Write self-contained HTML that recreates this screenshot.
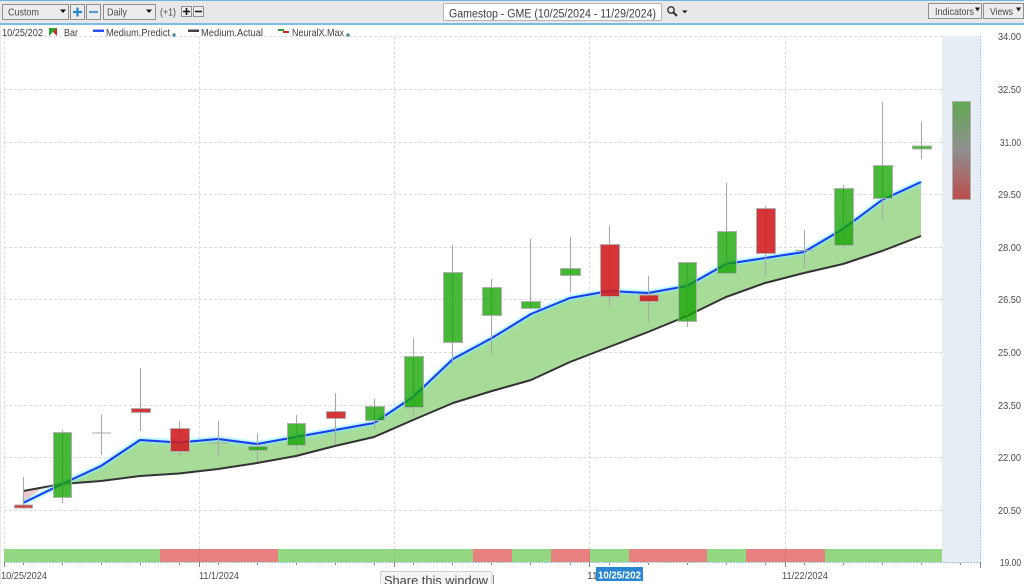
<!DOCTYPE html>
<html>
<head>
<meta charset="utf-8">
<style>
html,body{margin:0;padding:0;background:#fff}
#root{position:relative;width:1024px;height:584px;overflow:hidden;background:#fff;font-family:"Liberation Sans",sans-serif;color:#444}
svg{position:absolute;left:0;top:0;filter:blur(.35px)}
</style>
</head>
<body>
<div id="root">
<svg width="1024" height="584" viewBox="0 0 1024 584" font-family="Liberation Sans, sans-serif">
<defs>
<linearGradient id="fc" x1="0" y1="0" x2="0" y2="1">
<stop offset="0" stop-color="#62a854"/><stop offset=".5" stop-color="#8f8f8f"/><stop offset="1" stop-color="#bd4c4c"/>
</linearGradient>
<filter id="gl" x="-5%" y="-20%" width="110%" height="140%"><feGaussianBlur stdDeviation="1.2"/></filter>
</defs>
<!-- toolbar -->
<rect x="0" y="0" width="1024" height="24" fill="#e8e8e8"/>
<rect x="0" y="0" width="1024" height="1" fill="#6fb3e0"/>
<rect x="0" y="23" width="1024" height="2" fill="#7dbbe6"/>
<g fill="#ececec" stroke="#8f8f8f">
<rect x="2.500" y="4.500" width="66" height="15"/>
<rect x="70.500" y="4.500" width="14" height="15"/>
<rect x="86.500" y="4.500" width="14" height="15"/>
<rect x="103.500" y="4.500" width="52" height="15"/>
<rect x="181.500" y="6.500" width="10" height="10"/>
<rect x="193.500" y="6.500" width="10" height="10"/>
<rect x="928.500" y="3.500" width="53" height="15"/>
<rect x="983.500" y="3.500" width="40" height="15"/>
</g>
<rect x="443.500" y="3.500" width="218" height="17" rx="1" fill="#fff" stroke="#b5b5b5"/>
<g font-size="10.500" fill="#4a4a4a">
<text x="8" y="15.500" textLength="31" lengthAdjust="spacingAndGlyphs">Custom</text>
<text x="107" y="15.500" textLength="20" lengthAdjust="spacingAndGlyphs">Daily</text>
<text x="160" y="15.500" textLength="16" lengthAdjust="spacingAndGlyphs">(+1)</text>
<text x="935" y="15" textLength="39" lengthAdjust="spacingAndGlyphs">Indicators</text>
<text x="990" y="15" textLength="23" lengthAdjust="spacingAndGlyphs">Views</text>
</g>
<text x="449" y="17.500" font-size="11.500" fill="#3d3d3d" textLength="207" lengthAdjust="spacingAndGlyphs">Gamestop - GME (10/25/2024 - 11/29/2024)</text>
<g fill="#111">
<path d="M60 9.500h6l-3 3.500z"/><path d="M146 9.500h6l-3 3.500z"/>
<path d="M975 7.500h5l-2.500 4z"/><path d="M1016 7.500h5l-2.500 4z"/>
<path d="M682 10.500h5.500l-2.750 2.800z"/>
</g>
<path d="M77.500 7.500v9M73 12h9" stroke="#2a86c8" stroke-width="2.200"/>
<path d="M89 12h9" stroke="#5d9ac8" stroke-width="2.200"/>
<path d="M186.500 8v7M183 11.500h7M195 11.500h7" stroke="#111" stroke-width="1.600"/>
<circle cx="671" cy="10" r="3.200" fill="none" stroke="#333" stroke-width="1.400"/>
<path d="M673.500 12.500l3.500 3.500" stroke="#333" stroke-width="2"/>

<!-- forecast area -->
<rect x="942" y="36" width="38" height="526" fill="#e8eef6"/>
<!-- grid -->
<g stroke="#dcdcdc" stroke-dasharray="3 2" fill="none">
<path d="M4 36.500H942M4 89.500H942M4 142.500H942M4 194.500H942M4 247.500H942M4 299.500H942M4 352.500H942M4 405.500H942M4 457.500H942M4 510.500H942"/>
<path d="M4.500 36V562M199.500 36V562M394.500 36V562M589.500 36V562M785.500 36V562"/>
</g>
<path d="M0.500 25V584" stroke="#e6e6e6" stroke-width="1"/>
<path d="M980.500 36V562M4 562.500H980" stroke="#9dcbec" stroke-dasharray="2 1" fill="none"/>

<!-- bottom strip -->
<g>
<rect x="4" y="549" width="156" height="13" fill="#94d783"/>
<rect x="160" y="549" width="118" height="13" fill="#e78080"/>
<rect x="278" y="549" width="195" height="13" fill="#94d783"/>
<rect x="473" y="549" width="39" height="13" fill="#e78080"/>
<rect x="512" y="549" width="39" height="13" fill="#94d783"/>
<rect x="551" y="549" width="39" height="13" fill="#e78080"/>
<rect x="590" y="549" width="39" height="13" fill="#94d783"/>
<rect x="629" y="549" width="78" height="13" fill="#e78080"/>
<rect x="707" y="549" width="39" height="13" fill="#94d783"/>
<rect x="746" y="549" width="79" height="13" fill="#e78080"/>
<rect x="825" y="549" width="117" height="13" fill="#94d783"/>
</g>
<path d="M199.500 549V562M394.500 549V562M589.500 549V562M785.500 549V562" stroke="#000" stroke-opacity=".06"/>
<!-- ticks -->
<g stroke="#888" stroke-width="1">
<path d="M4.500 562v5M199.500 562v5M394.500 562v5M589.500 562v5M785.500 562v5M980.500 562v6"/>
<path d="M23.500 563v2M62.500 563v2M101.500 563v2M140.500 563v2M179.500 563v2M218.500 563v2M257.500 563v2M296.500 563v2M335.500 563v2M374.500 563v2M413.500 563v2M452.500 563v2M491.500 563v2M530.500 563v2M570.500 563v2M609.500 563v2M648.500 563v2M687.500 563v2M726.500 563v2M765.500 563v2M804.500 563v2M843.500 563v2M882.500 563v2M921.500 563v2M960.500 563v2"/>
</g>

<!-- fill between -->
<path d="M23 503L43 487L62 484L23 491Z" fill="#e9bcbc" opacity=".8"/>
<path d="M53 484.500L62 484L101 466L140 440L179 442.500L218 439L257 444L296 437L335 430L374 423L413 397L453 359L492 338L531 314L570 298L609 291L648 293L687 286L726 264L765 258L804 252L843 229L882 200L921 182V236L882 251L843 264L804 273L765 283L726 297L687 316L648 332L609 347L570 362L531 380L492 391L453 403L413 420L374 437L335 446L296 456L257 463L218 469L179 473.500L140 476L101 481L62 484Z" fill="#a7dc98"/>

<!-- lines -->
<path d="M23 491L62 484L101 481L140 476L179 473.500L218 469L257 463L296 456L335 446L374 437L413 420L453 403L492 391L531 380L570 362L609 347L648 332L687 316L726 297L765 283L804 273L843 264L882 251L921 236" fill="none" stroke="#333" stroke-width="2" stroke-linejoin="round"/>
<path d="M23 503L62 484L101 466L140 440L179 442.500L218 439L257 444L296 437L335 430L374 423L413 397L453 359L492 338L531 314L570 298L609 291L648 293L687 286L726 264L765 258L804 252L843 229L882 200L921 182" fill="none" stroke="#7ff0ff" stroke-width="4" filter="url(#gl)"/>
<path d="M23 503L62 484L101 466L140 440L179 442.500L218 439L257 444L296 437L335 430L374 423L413 397L453 359L492 338L531 314L570 298L609 291L648 293L687 286L726 264L765 258L804 252L843 229L882 200L921 182" fill="none" stroke="#2038ee" stroke-width="2" stroke-linejoin="round"/>

<!-- wicks -->
<g stroke="#a8a8a8" stroke-width="1.100">
<path d="M23.500 477V509M62.500 430V503M101.500 415V455M92 433H111M140.500 368V431M179.500 421V456M218.500 421V455M209 443H228M257.500 434V462M296.500 415V450M335.500 393V445M374.500 399V429M413.500 338V414M452.500 245V365M491.500 279V354M530.500 239V309M570.500 237V292M609.500 226V306M648.500 276V322M687.500 262V327M726.500 183V273M765.500 206V276M804.500 230V268M795 250.500H814M843.500 185V248M882.500 102V220M921.500 122V159"/>
</g>
<!-- bodies -->
<g fill="#14a400" fill-opacity=".78" stroke="#b0b0b0" stroke-width="1">
<rect x="53.500" y="432.500" width="18" height="65"/>
<rect x="248.500" y="446.500" width="19" height="4"/>
<rect x="287.500" y="423.500" width="18" height="22"/>
<rect x="365.500" y="406.500" width="19" height="14"/>
<rect x="404.500" y="356.500" width="19" height="51"/>
<rect x="443.500" y="272.500" width="19" height="70"/>
<rect x="482.500" y="287.500" width="19" height="28"/>
<rect x="521.500" y="301.500" width="19" height="7"/>
<rect x="560.500" y="268.500" width="20" height="7"/>
<rect x="678.500" y="262.500" width="18" height="59"/>
<rect x="717.500" y="231.500" width="19" height="42"/>
<rect x="834.500" y="188.500" width="19" height="57"/>
<rect x="873.500" y="165.500" width="19" height="33"/>
<rect x="912.500" y="146" width="19" height="3"/>
</g>
<g fill="#d11a1e" fill-opacity=".88" stroke="#b0b0b0" stroke-width="1">
<rect x="14.500" y="505" width="18" height="3"/>
<rect x="131.500" y="408.500" width="19" height="4"/>
<rect x="170.500" y="428.500" width="19" height="23"/>
<rect x="326.500" y="411.500" width="19" height="7"/>
<rect x="600.500" y="244.500" width="19" height="52"/>
<rect x="639.500" y="295" width="19" height="6.500"/>
<rect x="756.500" y="208.500" width="19" height="45"/>
</g>

<!-- forecast bar -->
<rect x="952.500" y="101.500" width="18" height="98" fill="url(#fc)" stroke="#b0b0b0"/>

<!-- legend -->
<g font-size="10" fill="#3f3f3f">
<text x="2" y="36" textLength="41" lengthAdjust="spacingAndGlyphs">10/25/202</text>
<text x="64" y="36" textLength="14" lengthAdjust="spacingAndGlyphs">Bar</text>
<text x="106" y="36" textLength="64" lengthAdjust="spacingAndGlyphs">Medium.Predict</text>
<text x="201" y="36" textLength="62" lengthAdjust="spacingAndGlyphs">Medium.Actual</text>
<text x="292" y="36" textLength="52" lengthAdjust="spacingAndGlyphs">NeuralX.Max</text>
</g>
<path d="M49 28h8v8z" fill="#d92626"/><path d="M49 28h8l-8 8z" fill="#2fa32f"/>
<rect x="93" y="29.500" width="11" height="2.500" fill="#2b50f0"/>
<rect x="188" y="29.500" width="11" height="2.500" fill="#444"/>
<path d="M278 29h6v2h-6z" fill="#2f9a2f"/><path d="M283 31h6v2h-6z" fill="#d02626"/>
<circle cx="174" cy="35" r="1.700" fill="#4b8aa8"/>
<circle cx="348" cy="35" r="1.700" fill="#4b8aa8"/>

<!-- y labels -->
<g font-size="10.500" fill="#4a4a4a" text-anchor="end">
<text x="1021" y="40" textLength="23" lengthAdjust="spacingAndGlyphs">34.00</text>
<text x="1021" y="93" textLength="23" lengthAdjust="spacingAndGlyphs">32.50</text>
<text x="1021" y="146" textLength="21" lengthAdjust="spacingAndGlyphs">31.00</text>
<text x="1021" y="198" textLength="23" lengthAdjust="spacingAndGlyphs">29.50</text>
<text x="1021" y="251" textLength="23" lengthAdjust="spacingAndGlyphs">28.00</text>
<text x="1021" y="303" textLength="23" lengthAdjust="spacingAndGlyphs">26.50</text>
<text x="1021" y="356" textLength="23" lengthAdjust="spacingAndGlyphs">25.00</text>
<text x="1021" y="409" textLength="23" lengthAdjust="spacingAndGlyphs">23.50</text>
<text x="1021" y="461" textLength="23" lengthAdjust="spacingAndGlyphs">22.00</text>
<text x="1021" y="514" textLength="23" lengthAdjust="spacingAndGlyphs">20.50</text>
<text x="1021" y="566" textLength="21" lengthAdjust="spacingAndGlyphs">19.00</text>
</g>
<!-- x labels -->
<g font-size="10.500" fill="#4a4a4a">
<text x="1" y="579" textLength="46" lengthAdjust="spacingAndGlyphs">10/25/2024</text>
<text x="199" y="579" textLength="40" lengthAdjust="spacingAndGlyphs">11/1/2024</text>
<text x="587" y="579">11/</text>
<text x="782" y="579" textLength="46" lengthAdjust="spacingAndGlyphs">11/22/2024</text>
</g>
<rect x="596" y="567" width="47" height="14" fill="#2a86d0"/>
<text x="598" y="578.500" font-size="10.500" font-weight="bold" fill="#fff" textLength="43" lengthAdjust="spacingAndGlyphs">10/25/202</text>

<!-- share tab -->
<path d="M380.500 584V573.500q0-2 2-2H490q2 0 2 2V584" fill="#f5f5f5" stroke="#d0d0d0"/>
<text x="384" y="585" font-size="12.800" fill="#444" textLength="104" lengthAdjust="spacingAndGlyphs">Share this window</text>
<path d="M493.500 575V584" stroke="#888"/>
</svg>
</div>
</body>
</html>
